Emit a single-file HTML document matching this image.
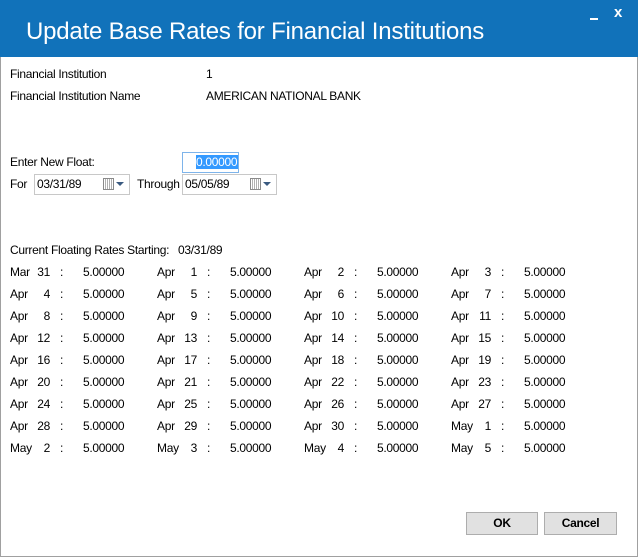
<!DOCTYPE html>
<html><head><meta charset="utf-8"><style>
*{margin:0;padding:0;box-sizing:border-box}
body{width:638px;height:557px;background:#fff;position:relative;overflow:hidden;font-family:"Liberation Sans",sans-serif;font-size:12px;color:#000;letter-spacing:-0.3px}
.win{position:absolute;left:0;top:0;width:638px;height:557px;border:1px solid #a0a0a0;border-top:none}
.tb{position:absolute;left:0;top:0;width:638px;height:57px;background:#1172ba}
.title{position:absolute;left:26px;top:17px;color:#fff;font-size:24px;letter-spacing:-0.2px;line-height:30px}
.t{position:absolute;line-height:14px;white-space:nowrap}
.c{position:absolute;width:140px;height:14px;line-height:14px}
.c span{position:absolute;top:0}
.m{left:0}.d{right:100px;text-align:right}.k{left:50px}.v{left:73px}
.box{position:absolute;border:1px solid #c8c8c8;background:#fff;height:21px}
.cal{position:absolute;top:4px;width:11px;height:12px;border:1px solid #8a8a8a;background:repeating-linear-gradient(90deg,#fff 0 1px,#b0b0b0 1px 2px)}
.arr{position:absolute;top:8px;width:0;height:0;border-left:4px solid transparent;border-right:4px solid transparent;border-top:4px solid #3a5a80}
.btn{position:absolute;top:512px;height:23px;background:#e1e1e1;border:1px solid #adadad;font-weight:bold;text-align:center;line-height:21px}
</style></head><body>
<div class="win"></div>
<div class="tb"></div>
<div class="title">Update Base Rates for Financial Institutions</div>
<div style="position:absolute;left:590px;top:18px;width:8px;height:2px;background:#fff"></div>
<div class="t" style="left:614px;top:6px;color:#fff;font-size:15px;font-weight:bold">x</div>

<div class="t" style="left:10px;top:67px">Financial Institution</div>
<div class="t" style="left:206px;top:67px">1</div>
<div class="t" style="left:10px;top:89px">Financial Institution Name</div>
<div class="t" style="left:206px;top:89px">AMERICAN NATIONAL BANK</div>

<div class="t" style="left:10px;top:155px">Enter New Float:</div>
<div class="box" style="left:182px;top:152px;width:57px;border-color:#7eb4ea"></div>
<div class="t" style="left:196px;top:155px;background:#3399ff;color:#fff;padding-right:1px">0.00000</div>

<div class="t" style="left:10px;top:177px">For</div>
<div class="box" style="left:34px;top:174px;width:96px"></div>
<div class="t" style="left:37px;top:177px">03/31/89</div>
<div class="cal" style="left:103px;top:178px"></div>
<div class="arr" style="left:116px;top:182px"></div>
<div class="t" style="left:137px;top:177px">Through</div>
<div class="box" style="left:182px;top:174px;width:95px"></div>
<div class="t" style="left:185px;top:177px">05/05/89</div>
<div class="cal" style="left:250px;top:178px"></div>
<div class="arr" style="left:263px;top:182px"></div>

<div class="t" style="left:10px;top:243px">Current Floating Rates Starting:</div>
<div class="t" style="left:178px;top:243px">03/31/89</div>

<div class="c" style="left:10px;top:265px"><span class="m">Mar</span><span class="d">31</span><span class="k">:</span><span class="v">5.00000</span></div>
<div class="c" style="left:157px;top:265px"><span class="m">Apr</span><span class="d">1</span><span class="k">:</span><span class="v">5.00000</span></div>
<div class="c" style="left:304px;top:265px"><span class="m">Apr</span><span class="d">2</span><span class="k">:</span><span class="v">5.00000</span></div>
<div class="c" style="left:451px;top:265px"><span class="m">Apr</span><span class="d">3</span><span class="k">:</span><span class="v">5.00000</span></div>

<div class="c" style="left:10px;top:287px"><span class="m">Apr</span><span class="d">4</span><span class="k">:</span><span class="v">5.00000</span></div>
<div class="c" style="left:157px;top:287px"><span class="m">Apr</span><span class="d">5</span><span class="k">:</span><span class="v">5.00000</span></div>
<div class="c" style="left:304px;top:287px"><span class="m">Apr</span><span class="d">6</span><span class="k">:</span><span class="v">5.00000</span></div>
<div class="c" style="left:451px;top:287px"><span class="m">Apr</span><span class="d">7</span><span class="k">:</span><span class="v">5.00000</span></div>

<div class="c" style="left:10px;top:309px"><span class="m">Apr</span><span class="d">8</span><span class="k">:</span><span class="v">5.00000</span></div>
<div class="c" style="left:157px;top:309px"><span class="m">Apr</span><span class="d">9</span><span class="k">:</span><span class="v">5.00000</span></div>
<div class="c" style="left:304px;top:309px"><span class="m">Apr</span><span class="d">10</span><span class="k">:</span><span class="v">5.00000</span></div>
<div class="c" style="left:451px;top:309px"><span class="m">Apr</span><span class="d">11</span><span class="k">:</span><span class="v">5.00000</span></div>

<div class="c" style="left:10px;top:331px"><span class="m">Apr</span><span class="d">12</span><span class="k">:</span><span class="v">5.00000</span></div>
<div class="c" style="left:157px;top:331px"><span class="m">Apr</span><span class="d">13</span><span class="k">:</span><span class="v">5.00000</span></div>
<div class="c" style="left:304px;top:331px"><span class="m">Apr</span><span class="d">14</span><span class="k">:</span><span class="v">5.00000</span></div>
<div class="c" style="left:451px;top:331px"><span class="m">Apr</span><span class="d">15</span><span class="k">:</span><span class="v">5.00000</span></div>

<div class="c" style="left:10px;top:353px"><span class="m">Apr</span><span class="d">16</span><span class="k">:</span><span class="v">5.00000</span></div>
<div class="c" style="left:157px;top:353px"><span class="m">Apr</span><span class="d">17</span><span class="k">:</span><span class="v">5.00000</span></div>
<div class="c" style="left:304px;top:353px"><span class="m">Apr</span><span class="d">18</span><span class="k">:</span><span class="v">5.00000</span></div>
<div class="c" style="left:451px;top:353px"><span class="m">Apr</span><span class="d">19</span><span class="k">:</span><span class="v">5.00000</span></div>

<div class="c" style="left:10px;top:375px"><span class="m">Apr</span><span class="d">20</span><span class="k">:</span><span class="v">5.00000</span></div>
<div class="c" style="left:157px;top:375px"><span class="m">Apr</span><span class="d">21</span><span class="k">:</span><span class="v">5.00000</span></div>
<div class="c" style="left:304px;top:375px"><span class="m">Apr</span><span class="d">22</span><span class="k">:</span><span class="v">5.00000</span></div>
<div class="c" style="left:451px;top:375px"><span class="m">Apr</span><span class="d">23</span><span class="k">:</span><span class="v">5.00000</span></div>

<div class="c" style="left:10px;top:397px"><span class="m">Apr</span><span class="d">24</span><span class="k">:</span><span class="v">5.00000</span></div>
<div class="c" style="left:157px;top:397px"><span class="m">Apr</span><span class="d">25</span><span class="k">:</span><span class="v">5.00000</span></div>
<div class="c" style="left:304px;top:397px"><span class="m">Apr</span><span class="d">26</span><span class="k">:</span><span class="v">5.00000</span></div>
<div class="c" style="left:451px;top:397px"><span class="m">Apr</span><span class="d">27</span><span class="k">:</span><span class="v">5.00000</span></div>

<div class="c" style="left:10px;top:419px"><span class="m">Apr</span><span class="d">28</span><span class="k">:</span><span class="v">5.00000</span></div>
<div class="c" style="left:157px;top:419px"><span class="m">Apr</span><span class="d">29</span><span class="k">:</span><span class="v">5.00000</span></div>
<div class="c" style="left:304px;top:419px"><span class="m">Apr</span><span class="d">30</span><span class="k">:</span><span class="v">5.00000</span></div>
<div class="c" style="left:451px;top:419px"><span class="m">May</span><span class="d">1</span><span class="k">:</span><span class="v">5.00000</span></div>

<div class="c" style="left:10px;top:441px"><span class="m">May</span><span class="d">2</span><span class="k">:</span><span class="v">5.00000</span></div>
<div class="c" style="left:157px;top:441px"><span class="m">May</span><span class="d">3</span><span class="k">:</span><span class="v">5.00000</span></div>
<div class="c" style="left:304px;top:441px"><span class="m">May</span><span class="d">4</span><span class="k">:</span><span class="v">5.00000</span></div>
<div class="c" style="left:451px;top:441px"><span class="m">May</span><span class="d">5</span><span class="k">:</span><span class="v">5.00000</span></div>

<div class="btn" style="left:466px;width:72px">OK</div>
<div class="btn" style="left:544px;width:73px">Cancel</div>
</body></html>
